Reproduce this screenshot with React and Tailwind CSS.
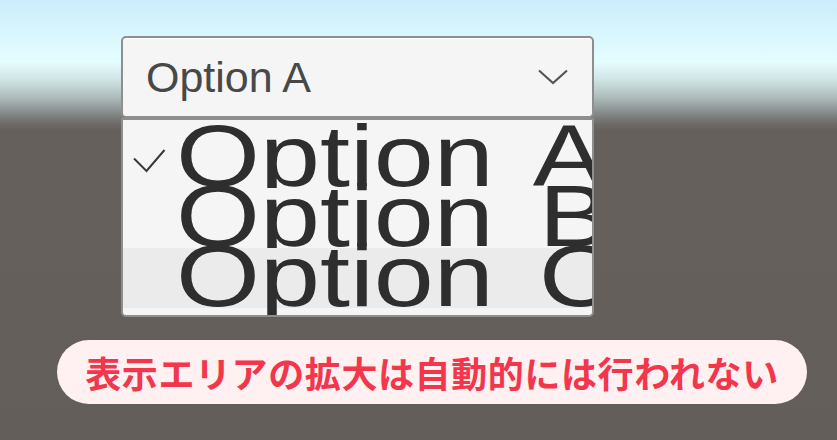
import React from "react";

const options = ["Option A", "Option B", "Option C"];

const App = () => {
  const selected = 0;
  const highlighted = 2;

  return (
    <div className="h-[440px] w-[837px] overflow-hidden bg-[linear-gradient(to_bottom,#cbecfa_0px,#d9f7fd_35px,#e4fdff_62px,#cfe3e3_80px,#b2c2c1_95px,#949e9d_107px,#7c7e7c_117px,#6c6866_125px,#66605c_131px,#645e5a_440px)]">
      <div className="w-[594px] pl-[121px] pt-[36px] font-['Liberation_Sans',sans-serif]">
        {/* dropdown button */}
        <div className="flex h-[82px] items-center justify-between rounded-[5px] border-2 border-[#8e8e8e] bg-[#f5f5f5] pl-[23px] pr-[24px] shadow-[inset_0_1px_0_#ffffff]">
          <span className="text-[43px] leading-none text-[#484848]">Option A</span>
          <svg width="30" height="16" viewBox="0 0 30 16" fill="none">
            <polyline
              points="1,1.5 15,14 29,1.5"
              stroke="#555555"
              strokeWidth="2.2"
              strokeLinejoin="miter"
            />
          </svg>
        </div>

        {/* dropdown list */}
        <div className="h-[199px] rounded-b-[5px] border-2 border-[#8e8e8e] bg-[#f5f5f5]">
          <div className="h-full overflow-hidden rounded-b-[3px] pt-[8px]">
            {options.map((opt, i) => (
              <div
                key={opt}
                className={`relative h-[60px] whitespace-nowrap pl-[53px] ${
                  i === highlighted ? "bg-[#ebebeb]" : "bg-[#f5f5f5]"
                }`}
              >
                {i === selected && (
                  <svg
                    className="absolute left-[10px] top-[20px]"
                    width="33"
                    height="25"
                    viewBox="0 0 33 25"
                    fill="none"
                  >
                    <polyline
                      points="1,10.5 13.5,23 31.5,2"
                      stroke="#3a3a3a"
                      strokeWidth="2"
                    />
                  </svg>
                )}
                <span className="inline-block origin-left scale-x-[1.24] text-[87px] leading-[56px] text-[#2e2e2e] [word-spacing:12px]">
                  {opt}
                </span>
              </div>
            ))}
          </div>
        </div>
      </div>

      {/* caption */}
      <div className="ml-[57px] mt-[23px] flex h-[64px] w-[750px] items-center justify-center rounded-full bg-[#fff0f1]">
        <span className="font-['Noto_Sans_CJK_JP',sans-serif] text-[36px] font-bold leading-none tracking-[0.6px] text-[#f2364b]">
          表示エリアの拡大は自動的には行われない
        </span>
      </div>
    </div>
  );
};

export default App;
